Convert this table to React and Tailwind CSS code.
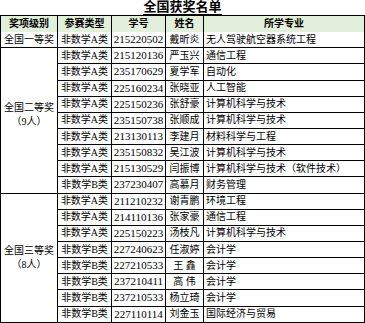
import React from "react";

const rows = [
  { type: "非数学A类", id: "215220502", name: "戴昕炎", major: "无人驾驶航空器系统工程" },
  { type: "非数学A类", id: "215120136", name: "严玉兴", major: "通信工程" },
  { type: "非数学A类", id: "235170629", name: "夏学军", major: "自动化" },
  { type: "非数学A类", id: "225160234", name: "张晓亚", major: "人工智能" },
  { type: "非数学A类", id: "225150236", name: "张舒豪", major: "计算机科学与技术" },
  { type: "非数学A类", id: "235150738", name: "张顺成", major: "计算机科学与技术" },
  { type: "非数学A类", id: "213130113", name: "李建月", major: "材料科学与工程" },
  { type: "非数学A类", id: "235150832", name: "吴江波", major: "计算机科学与技术" },
  { type: "非数学A类", id: "215130529", name: "闫振博", major: "计算机科学与技术（软件技术）" },
  { type: "非数学B类", id: "237230407", name: "高慕月", major: "财务管理" },
  { type: "非数学A类", id: "211210232", name: "谢青鹏", major: "环境工程" },
  { type: "非数学A类", id: "214110136", name: "张家豪", major: "通信工程" },
  { type: "非数学A类", id: "225150223", name: "汤枝凡", major: "计算机科学与技术" },
  { type: "非数学B类", id: "227240623", name: "任淑婷", major: "会计学" },
  { type: "非数学B类", id: "227210533", name: "王 鑫", major: "会计学" },
  { type: "非数学B类", id: "237210411", name: "高 伟", major: "会计学" },
  { type: "非数学B类", id: "237210533", name: "杨立琦", major: "会计学" },
  { type: "非数学B类", id: "227110114", name: "刘金玉", major: "国际经济与贸易" },
];

const cell = "bg-white flex items-center";

export default function App() {
  return (
    <div className="w-[365px] bg-white text-black font-['Liberation_Serif','Noto_Sans_CJK_SC',serif]">
      <div className="h-[15px] flex justify-center items-end">
        <span className="text-[13px] leading-[14px] font-bold border-b border-black">全国获奖名单</span>
      </div>

      <div className="grid grid-cols-[56px_53px_53px_37px_160px] auto-rows-[15.15px] gap-px p-px bg-black text-[10px] leading-none">
        {/* header */}
        {["奖项级别", "参赛类型", "学号", "姓名", "所学专业"].map((h) => (
          <div key={h} className="bg-[#E2EFDA] h-[15.6px] flex items-center justify-center font-bold">
            {h}
          </div>
        ))}

        {/* rank column */}
        <div className={`${cell} justify-center col-start-1 row-start-2`}>全国一等奖</div>
        <div className={`${cell} flex-col justify-center pb-[10px] col-start-1 row-start-3 row-span-9`}>
          <span>全国二等奖</span>
          <span className="mt-[4px]">（9人）</span>
        </div>
        <div className={`${cell} flex-col justify-center col-start-1 row-start-12 row-span-8`}>
          <span>全国三等奖</span>
          <span className="mt-[4px]">（8人）</span>
        </div>

        {rows.map((r, i) => (
          <React.Fragment key={r.id + i}>
            <div className={`${cell} justify-center col-start-2`} style={{ gridRowStart: i + 2 }}>
              {r.type}
            </div>
            <div className={`${cell} justify-center text-[11px]`} style={{ gridRowStart: i + 2 }}>
              {r.id}
            </div>
            <div className={`${cell} justify-center whitespace-pre`} style={{ gridRowStart: i + 2 }}>
              {r.name}
            </div>
            <div className={`${cell} pl-[2px] whitespace-nowrap`} style={{ gridRowStart: i + 2 }}>
              {r.major}
            </div>
          </React.Fragment>
        ))}
      </div>
    </div>
  );
}
